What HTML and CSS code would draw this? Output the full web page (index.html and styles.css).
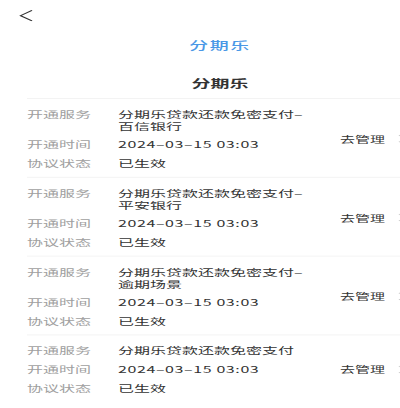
FILE: index.html
```html
<!DOCTYPE html>
<html lang="zh-CN">
<head>
<meta charset="utf-8">
<title>分期乐</title>
<link rel="stylesheet" href="styles.css">
</head>
<body>
<div class="page">
  <div class="nav">
    <svg class="back" width="14" height="20" viewBox="0 0 14 20"><polyline points="13,1 1.5,10 13,19" fill="none" stroke="#333" stroke-width="1.6"/></svg>
  </div>
  <div class="logo">分期乐</div>
  <div class="title">分期乐</div>
  <div class="list">
    <div class="card">
      <div class="info">
        <div class="row"><span class="label">开通服务</span><span class="value">分期乐贷款还款免密支付–百信银行</span></div>
        <div class="row"><span class="label">开通时间</span><span class="value num">2024–03–15 03:03</span></div>
        <div class="row"><span class="label">协议状态</span><span class="value">已生效</span></div>
      </div>
      <div class="action"><span>去管理</span><svg width="8" height="14" viewBox="0 0 8 14"><polyline points="1,1 7,7 1,13" fill="none" stroke="#ccc" stroke-width="1.5"/></svg></div>
    </div>
    <div class="card">
      <div class="info">
        <div class="row"><span class="label">开通服务</span><span class="value">分期乐贷款还款免密支付–平安银行</span></div>
        <div class="row"><span class="label">开通时间</span><span class="value num">2024–03–15 03:03</span></div>
        <div class="row"><span class="label">协议状态</span><span class="value">已生效</span></div>
      </div>
      <div class="action"><span>去管理</span><svg width="8" height="14" viewBox="0 0 8 14"><polyline points="1,1 7,7 1,13" fill="none" stroke="#ccc" stroke-width="1.5"/></svg></div>
    </div>
    <div class="card">
      <div class="info">
        <div class="row"><span class="label">开通服务</span><span class="value">分期乐贷款还款免密支付–逾期场景</span></div>
        <div class="row"><span class="label">开通时间</span><span class="value num">2024–03–15 03:03</span></div>
        <div class="row"><span class="label">协议状态</span><span class="value">已生效</span></div>
      </div>
      <div class="action"><span>去管理</span><svg width="8" height="14" viewBox="0 0 8 14"><polyline points="1,1 7,7 1,13" fill="none" stroke="#ccc" stroke-width="1.5"/></svg></div>
    </div>
    <div class="card">
      <div class="info">
        <div class="row"><span class="label">开通服务</span><span class="value">分期乐贷款还款免密支付</span></div>
        <div class="row"><span class="label">开通时间</span><span class="value num">2024–03–15 03:03</span></div>
        <div class="row"><span class="label">协议状态</span><span class="value">已生效</span></div>
      </div>
      <div class="action"><span>去管理</span><svg width="8" height="14" viewBox="0 0 8 14"><polyline points="1,1 7,7 1,13" fill="none" stroke="#ccc" stroke-width="1.5"/></svg></div>
    </div>
  </div>
</div>
</body>
</html>
```
FILE: styles.css
```css
html, body {
  margin: 0;
  padding: 0;
  overflow: hidden;
  background: #fff;
}
.page {
  width: 440px;
  transform: scaleY(0.58);
  transform-origin: 0 0;
  font-family: "Noto Sans CJK SC", "Noto Sans", sans-serif;
  color: #333;
}
.nav {
  height: 53px;
  box-sizing: border-box;
  padding: 17px 0 0 19px;
}
.back {
  display: block;
}
.logo {
  height: 50px;
  line-height: 50px;
  text-align: center;
  color: #4a98e6;
  font-size: 19px;
  font-weight: 500;
  letter-spacing: 1.5px;
}
.title {
  margin-top: 28px;
  height: 24px;
  line-height: 24px;
  padding-bottom: 14px;
  text-align: center;
  font-size: 19px;
  font-weight: 700;
  color: #333;
}
.list {
  margin-left: 27px;
}
.card {
  display: flex;
  align-items: center;
  padding: 16px 0 13px;
  border-top: 1px solid #ebebeb;
}
.info {
  width: 313px;
}
.row {
  display: flex;
  line-height: 21px;
  font-size: 16px;
}
.row + .row {
  margin-top: 11px;
}
.label {
  width: 91px;
  flex: none;
  color: #a0a0a0;
}
.value {
  width: 194px;
  color: #333;
}
.num {
  letter-spacing: 0.6px;
}
.action {
  display: flex;
  align-items: center;
  gap: 13px;
  font-size: 15px;
  color: #333;
}
.action svg {
  display: block;
}
```
